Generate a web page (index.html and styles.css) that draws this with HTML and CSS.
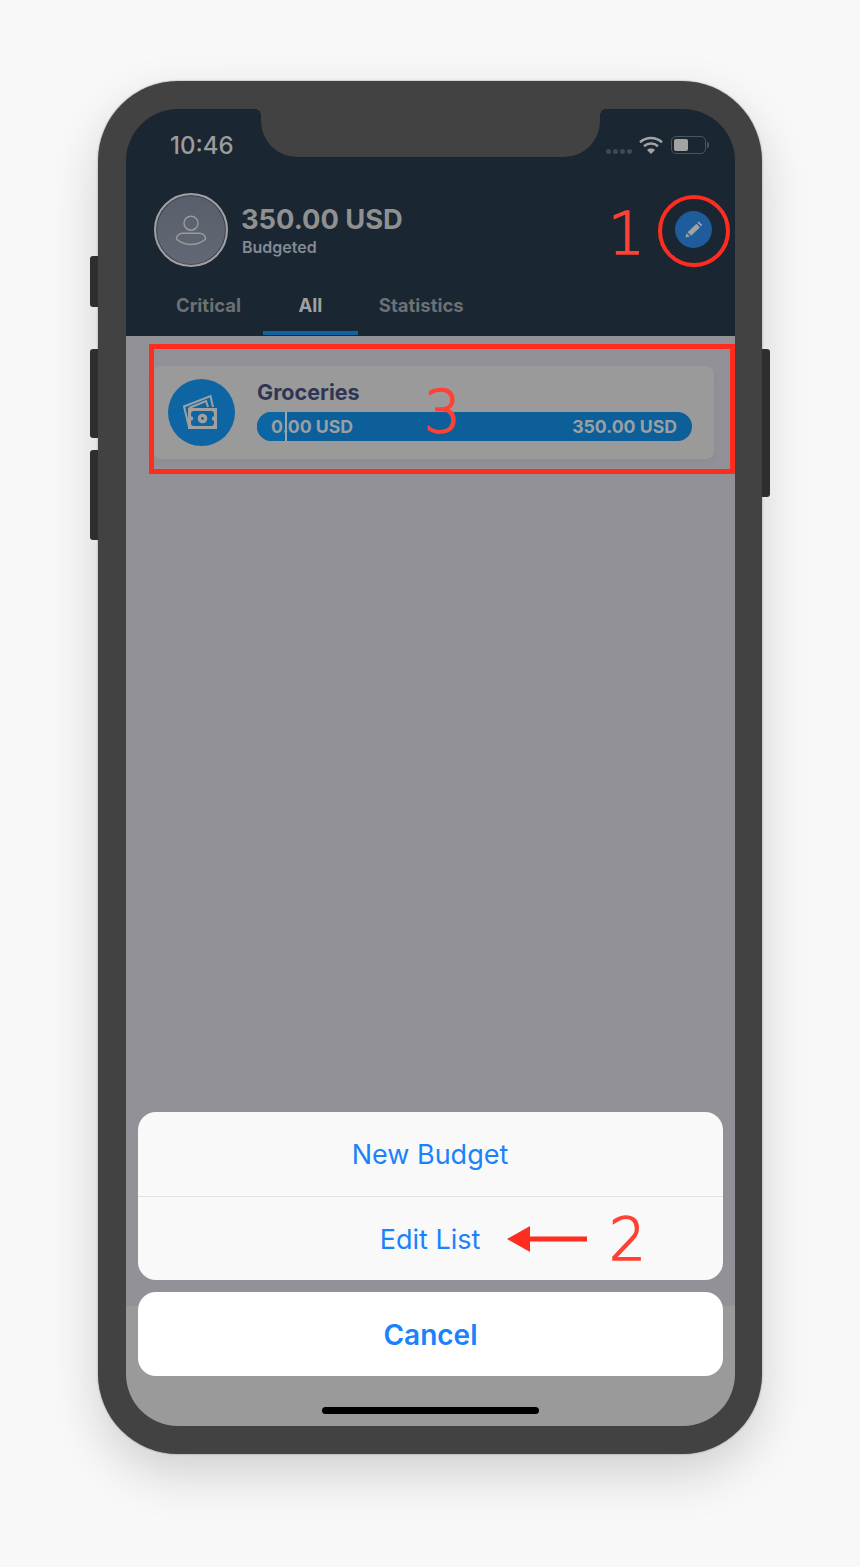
FILE: index.html
```html
<!DOCTYPE html>
<html lang="en">
<head>
  <meta charset="UTF-8" />
  <meta name="viewport" content="width=device-width, initial-scale=1.0" />
  <title>Budget list</title>
  <link rel="stylesheet" href="styles.css">
</head>
<body>
  <div class="page">
    <div class="phone">
      <span class="side-btn mute"></span>
      <span class="side-btn vol-up"></span>
      <span class="side-btn vol-down"></span>
      <span class="side-btn power"></span>

      <div class="screen">
        <div class="notch"></div>

        <header class="app-header">
          <div class="status-bar">
            <span class="time">10:46</span>
            <div class="status-icons">
              <span class="signal"><i></i><i></i><i></i><i></i></span>
              <svg class="wifi" width="24" height="18" viewBox="0 0 24 18">
                <path d="M1 6.200C7.200.6 16.800.6 23 6.200" />
                <path d="M5 10.200c4-3.500 10-3.500 14 0" />
                <path d="M12 18l-4-4c2.200-1.900 5.800-1.900 8 0z" class="wifi-dot" />
              </svg>
              <span class="battery"><span class="battery-level"></span></span>
              <span class="battery-nub"></span>
            </div>
          </div>

          <div class="profile">
            <div class="avatar">
              <svg width="38" height="38" viewBox="0 0 38 38">
                <circle cx="19" cy="12.200" r="7" />
                <path d="M4.500 27.500c0-3 3-5.300 6-5.300h17c3 0 6 2.300 6 5.300 0 1.500-7 6-14.500 6s-14.500-4.500-14.500-6z" />
              </svg>
            </div>
            <div class="totals">
              <div class="amount">350.00 USD</div>
              <div class="amount-label">Budgeted</div>
            </div>
            <button class="edit-btn">
              <svg width="20" height="20" viewBox="0 0 20 20">
                <path d="M1.500 17.500l1.100-4.300 3.200 3.200z" />
                <path d="M3.600 12.200L12.500 3.700l3.500 3.500-8.900 8.600z" />
                <path d="M13.500 2.700l1.300-1.200 3.500 3.500-1.300 1.200z" />
              </svg>
            </button>
          </div>

          <nav class="tabs">
            <a class="tab">Critical</a>
            <a class="tab active">All</a>
            <a class="tab">Statistics</a>
          </nav>
        </header>

        <main class="content">
          <div class="budget-card">
            <div class="budget-icon">
              <svg width="38" height="38" viewBox="0 0 38 38">
                <path class="note-back" d="M6 33L1 12.500 27.500 2l2.500 11" />
                <path class="note-back" d="M6 14l17-7 2 6" />
                <rect class="note-front" x="5" y="14" width="29" height="21" />
                <rect class="note-panel" x="8" y="17" width="23" height="15" rx="3" />
                <circle class="note-mark" cx="8" cy="24.500" r="2.200" />
                <circle class="note-mark" cx="31" cy="24.500" r="2.200" />
                <circle class="note-mark" cx="19.500" cy="24.500" r="4.800" />
                <circle class="note-panel" cx="19.500" cy="24.500" r="1.400" />
              </svg>
            </div>
            <div class="budget-info">
              <div class="budget-name">Groceries</div>
              <div class="budget-bar">
                <span class="bar-fill"></span>
                <span class="bar-text">0.00 USD</span>
                <span class="bar-text">350.00 USD</span>
              </div>
            </div>
          </div>

          <div class="action-sheet">
            <div class="sheet-group">
              <div class="sheet-item">New Budget</div>
              <div class="sheet-item">Edit List</div>
            </div>
            <div class="sheet-cancel">Cancel</div>
          </div>
          <div class="home-indicator"></div>
        </main>
      </div>

      <!-- annotations drawn over the screenshot -->
      <div class="mark-circle"></div>
      <div class="mark-rect"></div>
      <span class="mark-num num-1">1</span>
      <span class="mark-num num-2">2</span>
      <span class="mark-num num-3">3</span>
      <svg class="mark-arrow" width="80" height="26" viewBox="0 0 80 26">
        <path d="M0 13L23 0v10.500h57v5H23V26z" />
      </svg>
    </div>
  </div>
</body>
</html>
```

FILE: styles.css
```css
* {
  box-sizing: border-box;
}
body {
  margin: 0;
  background-color: #f8f8f8;
  font-family: Inter, "Liberation Sans", sans-serif;
}
.page {
  height: 1567px;
  padding: 81px 0 0 98px;
  overflow: hidden;
}
.phone {
  position: relative;
  width: 664px;
  height: 1373px;
  padding: 28px 27px 28px 28px;
  background-color: #424242;
  border-radius: 80px;
  box-shadow: 0 20px 50px rgba(0, 0, 0, 0.16), 0 0 2px rgba(0, 0, 0, 0.4);
}
.side-btn {
  position: absolute;
  left: -8px;
  width: 8px;
  background-color: #2e2e2e;
  border-radius: 3px 0 0 3px;
}
.mute { top: 175px; height: 51px; }
.vol-up { top: 268px; height: 89px; }
.vol-down { top: 369px; height: 90px; }
.power {
  left: auto;
  right: -8px;
  top: 268px;
  height: 148px;
  border-radius: 0 3px 3px 0;
}
.screen {
  position: relative;
  display: flex;
  flex-direction: column;
  height: 100%;
  border-radius: 52px;
  overflow: hidden;
}
.notch {
  position: absolute;
  top: 0;
  left: 135px;
  width: 339px;
  height: 48px;
  background-color: #424242;
  border-radius: 0 0 36px 36px;
}
.notch::before,
.notch::after {
  content: "";
  position: absolute;
  top: 0;
  width: 6px;
  height: 6px;
}
.notch::before {
  left: -6px;
  background-image: radial-gradient(circle at 0 100%, transparent 6px, #424242 6px);
}
.notch::after {
  right: -6px;
  background-image: radial-gradient(circle at 100% 100%, transparent 6px, #424242 6px);
}

/* header */
.app-header {
  height: 227px;
  background-color: #1a2632;
}
.status-bar {
  display: flex;
  justify-content: space-between;
  height: 84px;
  padding: 23px 26px 0 44px;
}
.time {
  color: #9c9c9c;
  font-size: 24px;
  line-height: 28px;
  font-weight: 500;
}
.status-icons {
  display: flex;
  align-items: center;
  height: 26px;
}
.signal {
  display: flex;
  gap: 2px;
  margin: 12px 7px 0 0;
}
.signal i {
  width: 5px;
  height: 5px;
  border-radius: 50%;
  background-color: #3f4a54;
}
.wifi path {
  fill: none;
  stroke: #a3a3a3;
  stroke-width: 2.500;
}
.wifi .wifi-dot {
  fill: #a3a3a3;
  stroke: none;
}
.battery {
  display: block;
  width: 35px;
  height: 18px;
  margin-left: 8px;
  padding: 2px;
  border: 1.500px solid #4b5660;
  border-radius: 5px;
}
.battery-level {
  display: block;
  width: 14px;
  height: 100%;
  background-color: #a3a3a3;
  border-radius: 2px;
}
.battery-nub {
  width: 2px;
  height: 6px;
  margin-left: 1px;
  background-color: #4b5660;
  border-radius: 0 2px 2px 0;
}
.profile {
  position: relative;
  display: flex;
  align-items: center;
  gap: 14px;
  height: 73px;
  padding-left: 28px;
}
.avatar {
  display: flex;
  align-items: center;
  justify-content: center;
  width: 74px;
  height: 74px;
  background-image: linear-gradient(#595f6a, #626874);
  border: 2.500px solid #a0a0a0;
  box-shadow: inset 0 0 0 1px #3c4350;
  border-radius: 50%;
}
.avatar svg {
  fill: none;
  stroke: #9a9a9a;
  stroke-width: 1.500;
}
.amount {
  margin-left: -1px;
  color: #909090;
  font-size: 27.300px;
  line-height: 34px;
  font-weight: 700;
}
.amount-label {
  color: #848a92;
  font-size: 16px;
  line-height: 20px;
  font-weight: 600;
}
.edit-btn {
  display: flex;
  align-items: center;
  justify-content: center;
  width: 37px;
  height: 37px;
  margin-left: auto;
  margin-right: 23px;
  padding: 0;
  background-color: #1e5c9c;
  border: none;
  border-radius: 50%;
}
.edit-btn svg {
  fill: #a3a3a3;
}
.tabs {
  display: flex;
  gap: 21px;
  margin-top: 18px;
  padding-left: 50px;
}
.tab {
  height: 51px;
  color: #6d7074;
  font-size: 18.500px;
  line-height: 43px;
  font-weight: 700;
  border-bottom: 4px solid transparent;
}
.tab.active {
  margin-left: 1px;
  padding: 0 35.500px;
  color: #a0a0a0;
  border-bottom-color: #0f63a0;
}

/* list */
.content {
  position: relative;
  display: flex;
  flex-direction: column;
  flex: 1;
  padding-top: 30px;
  background-image: linear-gradient(#929197 970px, #9a9a9a 970px);
}
.budget-card {
  display: flex;
  align-items: center;
  gap: 22px;
  height: 93px;
  margin: 0 21px 0 27px;
  padding: 0 22px 0 15px;
  background-color: #9a9a9a;
  border-radius: 8px;
  box-shadow: 0 4px 8px rgba(0, 0, 0, 0.04);
}
.budget-icon {
  display: flex;
  align-items: center;
  justify-content: center;
  flex: none;
  width: 67px;
  height: 67px;
  background-color: #0d66a3;
  border-radius: 50%;
}
.note-back {
  fill: none;
  stroke: #a0a0a0;
  stroke-width: 2;
}
.note-front,
.note-mark {
  fill: #a0a0a0;
}
.note-panel {
  fill: #0d66a3;
}
.budget-info {
  flex: 1;
  margin-bottom: 5px;
}
.budget-name {
  color: #2e3555;
  font-size: 21.500px;
  line-height: 26px;
  font-weight: 700;
  margin-bottom: 7px;
}
.budget-bar {
  position: relative;
  display: flex;
  justify-content: space-between;
  height: 29px;
  padding: 0 15px 0 14px;
  background-color: #0d5f9a;
  border-radius: 15px;
  overflow: hidden;
}
.bar-fill {
  position: absolute;
  left: 0;
  top: 0;
  width: 30px;
  height: 100%;
  background-color: #0d66a3;
  border-right: 2px solid #a0a5a8;
}
.bar-text {
  position: relative;
  color: #9a9fa3;
  font-size: 17.700px;
  line-height: 29px;
  font-weight: 700;
}

/* action sheet */
.action-sheet {
  display: flex;
  flex-direction: column;
  gap: 12px;
  margin: auto 12px 0;
}
.sheet-group {
  background-color: #f9f9f9;
  border-radius: 18px;
  overflow: hidden;
}
.sheet-item {
  height: 84px;
  padding-right: 1px;
  color: #1a82fb;
  font-size: 27px;
  line-height: 86px;
  text-align: center;
}
.sheet-item + .sheet-item {
  border-top: 1px solid #e2e2e4;
}
.sheet-cancel {
  height: 84px;
  color: #1a82fb;
  background-color: #fff;
  font-size: 28px;
  line-height: 86px;
  font-weight: 600;
  text-align: center;
  border-radius: 18px;
}
.home-indicator {
  width: 217px;
  height: 7px;
  margin: 31px auto 12px;
  background-color: #000;
  border-radius: 4px;
}

/* annotations */
.mark-circle {
  position: absolute;
  left: 560px;
  top: 114px;
  width: 72px;
  height: 72px;
  border: 4px solid #ff2d20;
  border-radius: 50%;
}
.mark-rect {
  position: absolute;
  left: 51px;
  top: 263px;
  width: 586px;
  height: 130px;
  border: 5px solid #ff2d20;
}
.mark-num {
  position: absolute;
  color: #ff4136;
  font-family: "DejaVu Sans", sans-serif;
  font-size: 58px;
  line-height: 62px;
  font-weight: 200;
  -webkit-text-stroke: 1.500px #ff4136;
}
.num-1 { left: 510px; top: 122px; }
.num-2 { left: 511px; top: 1128px; }
.num-3 { left: 326px; top: 300px; }
.mark-arrow {
  position: absolute;
  left: 409px;
  top: 1145px;
  fill: #ff2d20;
}
```
